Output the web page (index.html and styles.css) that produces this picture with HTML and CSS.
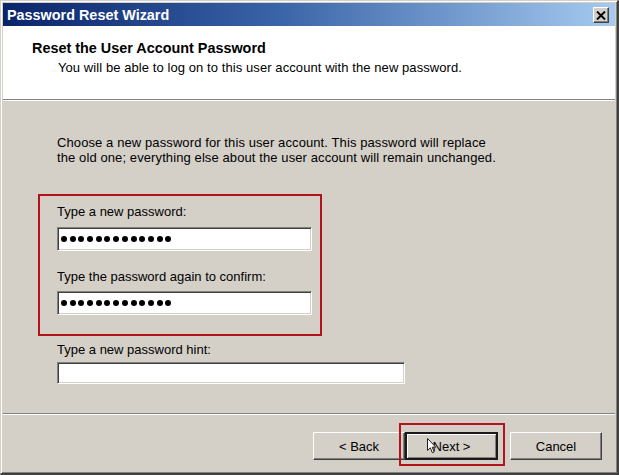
FILE: index.html
```html
<!DOCTYPE html>
<html lang="en">
<head>
  <meta charset="UTF-8" />
  <title>Password Reset Wizard</title>
  <link rel="stylesheet" href="styles.css">
</head>
<body>
  <div class="window">
    <div class="titlebar">
      <span class="title">Password Reset Wizard</span>
      <div class="close-btn">
        <svg width="10" height="9" viewBox="0 0 10 9">
          <path d="M1 0.5 L9 8.5 M9 0.5 L1 8.5" stroke="#000" stroke-width="2" />
        </svg>
      </div>
    </div>

    <div class="header">
      <h1>Reset the User Account Password</h1>
      <p>You will be able to log on to this user account with the new password.</p>
    </div>

    <div class="content">
      <p class="intro">Choose a new password for this user account. This password will replace<br>the old one; everything else about the user account will remain unchanged.</p>

      <div class="highlight">
        <label>Type a new password:</label>
        <div class="field pwd">
          <span></span><span></span><span></span><span></span><span></span><span></span><span></span>
          <span></span><span></span><span></span><span></span><span></span><span></span>
        </div>
        <label class="second">Type the password again to confirm:</label>
        <div class="field pwd">
          <span></span><span></span><span></span><span></span><span></span><span></span><span></span>
          <span></span><span></span><span></span><span></span><span></span><span></span>
        </div>
      </div>

      <div class="hint">
        <label>Type a new password hint:</label>
        <div class="field wide"></div>
      </div>
    </div>

    <div class="footer">
      <button class="btn">&lt; Back</button>
      <button class="btn default">
        Next &gt;
        <span class="marker"></span>
        <svg class="cursor" width="10" height="16" viewBox="0 0 10 16">
          <path d="M0.5 0.5 L0.5 12.5 L3.3 9.8 L5.4 14.8 L7.2 14 L5.2 9.2 L8.8 9.2 Z" fill="#fff" stroke="#222" stroke-width="1" />
        </svg>
      </button>
      <button class="btn cancel">Cancel</button>
    </div>
  </div>
</body>
</html>
```

FILE: styles.css
```css
html, body {
  margin: 0;
  padding: 0;
  height: 100%;
}

body {
  font-family: "Liberation Sans", Arial, sans-serif;
  font-size: 13px;
  color: #000;
  background-color: #d4d0c8;
}

.window {
  box-sizing: border-box;
  height: 100vh;
  display: flex;
  flex-direction: column;
  border-style: solid;
  border-width: 1px 2px 2px 1px;
  border-color: #d4d0c8 #404040 #404040 #d4d0c8;
  box-shadow: inset 1px 1px #fff, inset -1px -1px #808080;
  padding: 2px;
  background-color: #d4d0c8;
}

.titlebar {
  height: 23px;
  display: flex;
  align-items: center;
  justify-content: space-between;
  padding: 0 6px 0 4px;
  background: linear-gradient(to right, #0a246a, #3a64a8 45%, #a6caf0);
}

.title {
  color: #fff;
  font-weight: bold;
  font-size: 14.4px;
}

.close-btn {
  box-sizing: border-box;
  width: 16px;
  height: 16px;
  display: flex;
  align-items: center;
  justify-content: center;
  background-color: #d4d0c8;
  border: 1px solid;
  border-color: #fff #404040 #404040 #fff;
  box-shadow: inset -1px -1px #808080;
  margin-top: 1px;
}

.header {
  height: 74px;
  box-sizing: border-box;
  padding: 14px 0 0 29px;
  background-color: #fff;
  border-bottom: 1px solid #808080;
  box-shadow: 0 1px #fff;
}

.header h1 {
  margin: 0;
  font-size: 14.4px;
  line-height: 16px;
  font-weight: bold;
}

.header p {
  margin: 5px 0 0 26px;
  line-height: 14px;
  letter-spacing: 0.08px;
}

.content {
  flex: 1;
  padding: 35px 0 0 54px;
}

.intro {
  margin: 0;
  line-height: 15px;
  letter-spacing: 0.1px;
}

label {
  display: block;
  line-height: 15px;
}

.highlight {
  width: 284px;
  box-sizing: border-box;
  margin: 29px 0 0 -19px;
  padding: 8px 0 19px 17px;
  border: 2px solid #b3141c;
}

.highlight label {
  margin-bottom: 8px;
}

.highlight label.second {
  margin-top: 18px;
  margin-bottom: 7px;
}

.field {
  box-sizing: border-box;
  width: 255px;
  height: 24px;
  background-color: #fff;
  border: 1px solid;
  border-color: #808080 #fff #fff #808080;
  box-shadow: inset 1px 1px #404040, inset -1px -1px #d4d0c8;
}

.pwd {
  display: flex;
  align-items: center;
  gap: 2.7px;
  padding-left: 3px;
}

.pwd span {
  width: 6px;
  height: 6px;
  border-radius: 50%;
  background-color: #000;
}

.hint {
  margin-top: 6px;
}

.hint label {
  margin-bottom: 5px;
}

.field.wide {
  width: 348px;
  height: 22px;
}

.footer {
  display: flex;
  justify-content: flex-end;
  height: 58px;
  box-sizing: border-box;
  padding: 18px 13px 0 0;
  border-top: 1px solid #808080;
  box-shadow: inset 0 1px #fff;
}

.btn {
  position: relative;
  box-sizing: border-box;
  width: 92px;
  height: 28px;
  font-family: "Liberation Sans", Arial, sans-serif;
  font-size: 13px;
  color: #000;
  background-color: #d4d0c8;
  border: 1px solid;
  border-color: #fff #404040 #404040 #fff;
  box-shadow: inset -1px -1px #808080;
  padding: 0;
}

.btn.default {
  width: 93px;
  border: 2px solid #1a1a1a;
  box-shadow: inset 1px 1px #fff, inset -1px -1px #808080;
}

.btn.cancel {
  margin-left: 12px;
}

.marker {
  position: absolute;
  top: -11px;
  left: -8px;
  right: -9px;
  bottom: -8px;
  border: 2px solid #b3141c;
}

.cursor {
  position: absolute;
  left: 20px;
  top: 4px;
}
```
